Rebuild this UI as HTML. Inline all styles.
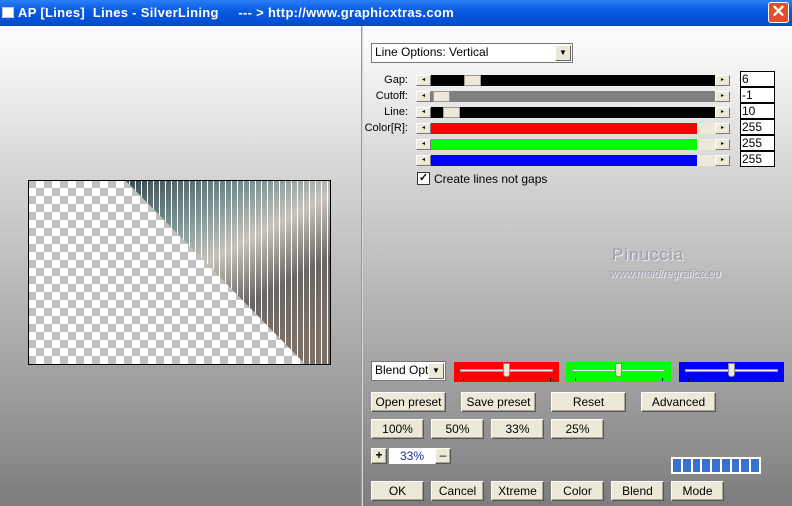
<!DOCTYPE html>
<html><head><meta charset="utf-8"><style>
*{margin:0;padding:0;box-sizing:border-box}
body{width:792px;height:506px;overflow:hidden;position:relative;font-family:"Liberation Sans",sans-serif;font-size:11px;background:#888}
.a{position:absolute}
#title{left:0;top:0;width:792px;height:26px;background:linear-gradient(#2a7ef5,#0a5be0 40%,#0650d8 80%,#0a48c0);color:#fff;font-weight:bold;font-size:13px}
.panel{top:26px;height:480px;background:linear-gradient(#fff,#d6d6d6 30%,#a5a5a5 70%,#7d7d7d)}
.btn{position:absolute;background:#ece9d8;border:1px solid;border-color:#fff #555 #555 #fff;box-shadow:inset -1px -1px 0 #aca899;font-size:12px;text-align:center;color:#000}
.sb{position:absolute;width:15px;height:11px;background:#ece9d8;border:1px solid;border-color:#fff #777 #777 #fff;font-size:6px;line-height:9px;text-align:center}
.num{position:absolute;left:740px;width:35px;height:16px;background:#fff;border:1px solid #000;font-size:12px;line-height:14px;padding-left:1px}
.lbl{position:absolute;width:60px;left:348px;text-align:right;font-size:11px}
.cp{position:absolute;top:362px;height:20px;width:105px}
.cp .tr{position:absolute;left:6px;right:6px;top:7px;height:3px;background:#eee;border:1px solid #999}
.cp .th{position:absolute;left:49px;top:1px;width:7px;height:14px;background:#ece9d8;border:1px solid #888;border-radius:0 0 3px 3px}
.cp .tk{position:absolute;top:16px;width:1px;height:3px;background:#000}
</style></head><body>
<div class="a" id="title">
<div class="a" style="left:2px;top:7px;width:12px;height:11px;background:#fff;border:1px solid #ccc"></div>
<div class="a" style="left:18px;top:5px;letter-spacing:0.3px">AP [Lines]&nbsp; Lines - SilverLining&nbsp;&nbsp;&nbsp;&nbsp; --- &gt; http://www.graphicxtras.com</div>
<div class="a" style="left:768px;top:2px;width:21px;height:21px;background:#e0502a;border:1px solid #fff;border-radius:3px;color:#fff;font-size:17px;line-height:18px;text-align:center">✕</div>
</div>
<div class="a panel" style="left:0;width:361px"></div>
<div class="a" style="left:361px;top:26px;width:2px;height:480px;background:#d8d8d8;border-left:1px solid #999"></div>
<div class="a panel" style="left:363px;width:429px"></div>

<!-- image -->
<svg class="a" style="left:28px;top:180px" width="303" height="185">
<defs>
<pattern id="ch" width="16" height="16" patternUnits="userSpaceOnUse"><rect width="16" height="16" fill="#fff"/><rect width="8" height="8" fill="#c0c0c0"/><rect x="8" y="8" width="8" height="8" fill="#c0c0c0"/></pattern>
<linearGradient id="g1" x1="0" y1="0" x2="0.6" y2="1"><stop offset="0" stop-color="#3a4a50"/><stop offset="0.3" stop-color="#7f9696"/><stop offset="0.5" stop-color="#c8c4bc"/><stop offset="0.75" stop-color="#6a6662"/><stop offset="1" stop-color="#7a7068"/></linearGradient>
<pattern id="ln" width="6" height="185" patternUnits="userSpaceOnUse"><rect x="5" width="1" height="185" fill="#fff"/></pattern>
</defs>
<rect width="303" height="185" fill="url(#ch)"/>
<polygon points="97,0 303,0 303,185 278,185" fill="url(#g1)"/>
<polygon points="97,0 303,0 303,185 278,185" fill="url(#ln)"/>
<rect x="0.5" y="0.5" width="302" height="184" fill="none" stroke="#000"/>
</svg>

<!-- right top -->
<div class="a" style="left:371px;top:43px;width:202px;height:20px;background:#fff;border:1px solid #777;font-size:12px;line-height:17px;padding-left:3px">Line Options: Vertical</div>
<div class="a" style="left:555px;top:45px;width:16px;height:16px;background:#ece9d8;border:1px solid;border-color:#fff #666 #666 #fff;font-size:8px;text-align:center;line-height:14px">▼</div>

<div class="lbl" style="top:74px">Gap:</div>
<div class="lbl" style="top:90px">Cutoff:</div>
<div class="lbl" style="top:106px">Line:</div>
<div class="lbl" style="top:122px">Color[R]:</div>

<!-- sliders -->
<div class="sb" style="left:416px;top:75px">◂</div><div class="a" style="left:431px;top:75px;width:284px;height:11px;background:#000"></div><div class="a" style="left:464px;top:75px;width:17px;height:11px;background:#ece9d8;border:1px solid #999"></div><div class="sb" style="left:715px;top:75px">▸</div>
<div class="sb" style="left:416px;top:91px">◂</div><div class="a" style="left:431px;top:91px;width:284px;height:11px;background:#808080"></div><div class="a" style="left:433px;top:91px;width:17px;height:11px;background:#ece9d8;border:1px solid #999"></div><div class="sb" style="left:715px;top:91px">▸</div>
<div class="sb" style="left:416px;top:107px">◂</div><div class="a" style="left:431px;top:107px;width:284px;height:11px;background:#000"></div><div class="a" style="left:443px;top:107px;width:17px;height:11px;background:#ece9d8;border:1px solid #999"></div><div class="sb" style="left:715px;top:107px">▸</div>
<div class="sb" style="left:416px;top:123px">◂</div><div class="a" style="left:431px;top:123px;width:284px;height:11px;background:#ece9d8"></div><div class="a" style="left:431px;top:123px;width:266px;height:11px;background:#f00"></div><div class="sb" style="left:715px;top:123px">▸</div>
<div class="sb" style="left:416px;top:139px">◂</div><div class="a" style="left:431px;top:139px;width:284px;height:11px;background:#ece9d8"></div><div class="a" style="left:431px;top:139px;width:266px;height:11px;background:#0f0"></div><div class="sb" style="left:715px;top:139px">▸</div>
<div class="sb" style="left:416px;top:155px">◂</div><div class="a" style="left:431px;top:155px;width:284px;height:11px;background:#ece9d8"></div><div class="a" style="left:431px;top:155px;width:266px;height:11px;background:#00f"></div><div class="sb" style="left:715px;top:155px">▸</div>

<div class="num" style="top:71px">6</div>
<div class="num" style="top:87px">-1</div>
<div class="num" style="top:103px">10</div>
<div class="num" style="top:119px">255</div>
<div class="num" style="top:135px">255</div>
<div class="num" style="top:151px">255</div>

<div class="a" style="left:417px;top:172px;width:13px;height:13px;background:#fff;border:1px solid #333;font-size:11px;line-height:11px;text-align:center;font-weight:bold">✓</div>
<div class="a" style="left:434px;top:172px;font-size:12px">Create lines not gaps</div>

<div class="a" style="left:612px;top:245px;font-size:17px;color:#9a9aaa;text-shadow:1px 1px 0 #eee;letter-spacing:1px">Pinuccia</div>
<div class="a" style="left:610px;top:268px;font-size:11px;color:#9a9aaa;text-shadow:1px 1px 0 #eee;font-style:italic">www.maidiregrafica.eu</div>

<!-- bottom -->
<div class="a" style="left:371px;top:361px;width:75px;height:20px;background:#fff;border:1px solid #777;font-size:12px;line-height:17px;padding-left:3px;overflow:hidden;white-space:nowrap">Blend Optio</div>
<div class="a" style="left:428px;top:363px;width:16px;height:16px;background:#ece9d8;border:1px solid;border-color:#fff #666 #666 #fff;font-size:8px;text-align:center;line-height:14px">▼</div>

<div class="cp" style="left:454px;background:#f00"><div class="tr"></div><div class="th"></div><div class="tk" style="left:9px"></div><div class="tk" style="left:96px"></div></div>
<div class="cp" style="left:566px;background:#0f0"><div class="tr"></div><div class="th"></div><div class="tk" style="left:9px"></div><div class="tk" style="left:96px"></div></div>
<div class="cp" style="left:679px;background:#00f"><div class="tr"></div><div class="th"></div><div class="tk" style="left:9px"></div><div class="tk" style="left:96px"></div></div>

<div class="btn" style="left:371px;top:392px;width:75px;height:20px;line-height:18px">Open preset</div>
<div class="btn" style="left:461px;top:392px;width:75px;height:20px;line-height:18px">Save preset</div>
<div class="btn" style="left:551px;top:392px;width:75px;height:20px;line-height:18px">Reset</div>
<div class="btn" style="left:641px;top:392px;width:75px;height:20px;line-height:18px">Advanced</div>

<div class="btn" style="left:371px;top:419px;width:53px;height:20px;line-height:18px">100%</div>
<div class="btn" style="left:431px;top:419px;width:53px;height:20px;line-height:18px">50%</div>
<div class="btn" style="left:491px;top:419px;width:53px;height:20px;line-height:18px">33%</div>
<div class="btn" style="left:551px;top:419px;width:53px;height:20px;line-height:18px">25%</div>

<div class="btn" style="left:371px;top:448px;width:16px;height:16px;line-height:13px;font-weight:bold">+</div>
<div class="a" style="left:389px;top:448px;width:46px;height:16px;background:#fff;color:#1a2a9a;font-size:12px;text-align:center;line-height:16px">33%</div>
<div class="btn" style="left:435px;top:448px;width:16px;height:16px;line-height:13px">–</div>

<div class="a" style="left:671px;top:457px;width:90px;height:17px;background:#fff;padding:2px;display:flex;gap:2px">
<div style="flex:1;background:#3a70d0"></div><div style="flex:1;background:#3a70d0"></div><div style="flex:1;background:#3a70d0"></div><div style="flex:1;background:#3a70d0"></div><div style="flex:1;background:#3a70d0"></div><div style="flex:1;background:#3a70d0"></div><div style="flex:1;background:#3a70d0"></div><div style="flex:1;background:#3a70d0"></div><div style="flex:1;background:#3a70d0"></div></div>

<div class="btn" style="left:371px;top:481px;width:53px;height:20px;line-height:18px">OK</div>
<div class="btn" style="left:431px;top:481px;width:53px;height:20px;line-height:18px">Cancel</div>
<div class="btn" style="left:491px;top:481px;width:53px;height:20px;line-height:18px">Xtreme</div>
<div class="btn" style="left:551px;top:481px;width:53px;height:20px;line-height:18px">Color</div>
<div class="btn" style="left:611px;top:481px;width:53px;height:20px;line-height:18px">Blend</div>
<div class="btn" style="left:671px;top:481px;width:53px;height:20px;line-height:18px">Mode</div>
</body></html>
